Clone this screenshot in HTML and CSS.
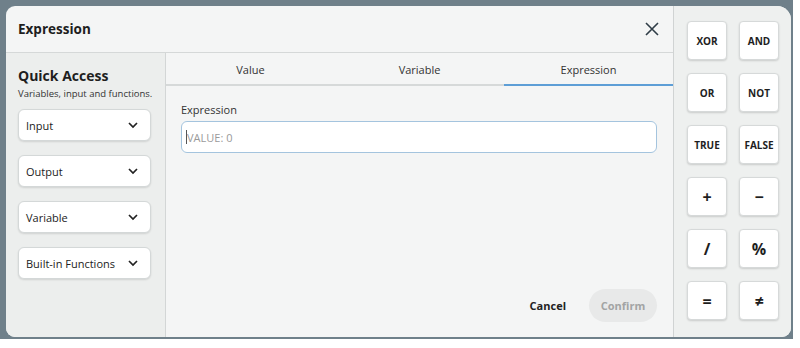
FILE: index.html
```html
<!DOCTYPE html>
<html>
<head>
<meta charset="utf-8">
<link rel="stylesheet" href="styles.css">
</head>
<body>
<div class="backdrop">
  <div class="card">
    <div class="main">
      <div class="header">
        <span class="title">Expression</span>
        <svg class="close" width="14" height="14" viewBox="0 0 14 14"><path d="M1 1L13 13M13 1L1 13" stroke="#2f3d47" stroke-width="1.6" fill="none"/></svg>
      </div>
      <div class="body">
        <div class="sidebar">
          <div class="qa-title">Quick Access</div>
          <div class="qa-sub">Variables, input and functions.</div>
          <div class="dropdowns">
            <div class="dropdown"><span>Input</span><svg width="10" height="7" viewBox="0 0 10 7"><path d="M1 1L5 5L9 1" stroke="#222" stroke-width="1.7" fill="none"/></svg></div>
            <div class="dropdown"><span>Output</span><svg width="10" height="7" viewBox="0 0 10 7"><path d="M1 1L5 5L9 1" stroke="#222" stroke-width="1.7" fill="none"/></svg></div>
            <div class="dropdown"><span>Variable</span><svg width="10" height="7" viewBox="0 0 10 7"><path d="M1 1L5 5L9 1" stroke="#222" stroke-width="1.7" fill="none"/></svg></div>
            <div class="dropdown"><span>Built-in Functions</span><svg width="10" height="7" viewBox="0 0 10 7"><path d="M1 1L5 5L9 1" stroke="#222" stroke-width="1.7" fill="none"/></svg></div>
          </div>
        </div>
        <div class="content">
          <div class="tabs">
            <div class="tab">Value</div>
            <div class="tab">Variable</div>
            <div class="tab active">Expression</div>
          </div>
          <div class="form">
            <div class="label">Expression</div>
            <div class="input"><span class="caret"></span><span class="placeholder">VALUE: 0</span></div>
          </div>
          <div class="footer">
            <span class="cancel">Cancel</span>
            <span class="confirm">Confirm</span>
          </div>
        </div>
      </div>
    </div>
    <div class="ops">
      <div class="op">XOR</div>
      <div class="op">AND</div>
      <div class="op">OR</div>
      <div class="op">NOT</div>
      <div class="op">TRUE</div>
      <div class="op">FALSE</div>
      <div class="op big">+</div>
      <div class="op big">−</div>
      <div class="op big">/</div>
      <div class="op big">%</div>
      <div class="op big">=</div>
      <div class="op big">≠</div>
    </div>
  </div>
</div>
</body>
</html>
```
FILE: styles.css
```css
* { box-sizing: border-box; }
html, body { margin: 0; padding: 0; background: #ffffff; }
body { font-family: "Open Sans", "Noto Sans", sans-serif; color: #222; }

.backdrop {
  width: 793px;
  height: 339px;
  background: #6f808a;
  padding: 6px 0 0 6px;
}
.card {
  width: 785px;
  height: 331px;
  background: #f4f5f5;
  border-radius: 9px 14px 9px 9px;
  display: flex;
  overflow: hidden;
}
.main {
  width: 667px;
  display: flex;
  flex-direction: column;
}
.header {
  height: 47px;
  border-bottom: 1px solid #d5d8d8;
  display: flex;
  align-items: center;
  justify-content: space-between;
  padding: 0 14px 0 12px;
}
.title { font-size: 13.5px; font-weight: 700; color: #1e1e1e; }
.close { display: block; }

.body { flex: 1; display: flex; }
.sidebar {
  width: 160px;
  background: #eceeed;
  border-right: 1px solid #d3d6d6;
  padding: 14px 0 0 12px;
}
.qa-title { font-size: 14px; font-weight: 700; color: #1e1e1e; line-height: 18px; }
.qa-sub { font-size: 9.5px; color: #333; margin-top: 2px; line-height: 13px; }
.dropdowns { display: flex; flex-direction: column; gap: 14px; margin-top: 9px; }
.dropdown {
  width: 133px;
  height: 32px;
  background: #fff;
  border: 1px solid #d4d8d8;
  border-radius: 6px;
  box-shadow: 0 1px 2px rgba(0,0,0,0.12);
  display: flex;
  align-items: center;
  justify-content: space-between;
  padding: 0 12px 0 7px;
  font-size: 11px;
  color: #222;
}

.content { flex: 1; display: flex; flex-direction: column; }
.tabs { display: flex; height: 33px; border-bottom: 2px solid #d6d9d9; }
.tab {
  flex: 1;
  display: flex;
  align-items: center;
  justify-content: center;
  font-size: 11px;
  color: #333;
  margin-bottom: -2px;
  padding-top: 2px;
  border-bottom: 2px solid transparent;
}
.tab.active { border-bottom-color: #5d9ed6; }
.form { padding: 17px 16px 0 15px; }
.label { font-size: 11px; color: #333; line-height: 14px; }
.input {
  margin-top: 4px;
  height: 32px;
  background: #fff;
  border: 1px solid #a4c4de;
  border-radius: 6px;
  display: flex;
  align-items: center;
  padding-left: 4px;
  font-size: 11px;
}
.caret { width: 1px; height: 14px; background: #555; }
.placeholder { color: #9a9a9a; }
.footer {
  margin-top: auto;
  display: flex;
  justify-content: flex-end;
  align-items: center;
  gap: 23px;
  padding: 0 16px 15px 0;
}
.cancel { font-size: 11px; font-weight: 700; color: #222; }
.confirm {
  height: 33px;
  width: 68px;
  border-radius: 17px;
  background: #e8e9e9;
  color: #a2a4a4;
  font-size: 11px;
  font-weight: 700;
  display: flex;
  align-items: center;
  justify-content: center;
}

.ops {
  width: 118px;
  background: #eef0ef;
  border-left: 1px solid #d0d3d3;
  display: grid;
  grid-template-columns: 40px 40px;
  grid-auto-rows: 39px;
  column-gap: 12px;
  row-gap: 13px;
  padding: 15px 0 0 13px;
  align-content: start;
}
.op {
  background: #fff;
  border: 1px solid #d6d9d9;
  border-radius: 4px;
  box-shadow: 0 1px 2px rgba(0,0,0,0.15);
  display: flex;
  align-items: center;
  justify-content: center;
  font-size: 10px;
  font-weight: 700;
  color: #1e1e1e;
}
.op.big { font-size: 16px; }
```
